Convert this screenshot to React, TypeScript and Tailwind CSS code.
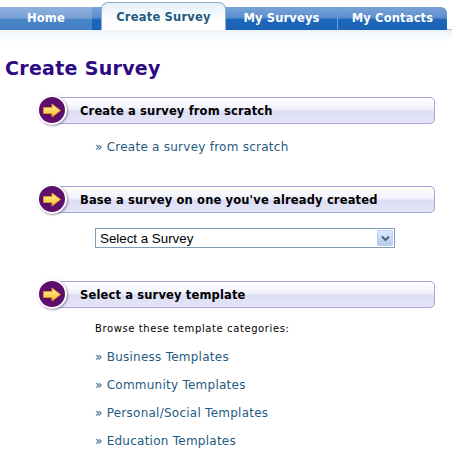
const V = { fontFamily: '"DejaVu Sans", Verdana, sans-serif' };

function Arrow() {
  return (
    <div className="absolute left-[-8px] top-[-2px] flex h-[30px] w-[30px] items-center justify-center rounded-full border-2 border-white bg-[#5c0f6b] shadow-[1px_1px_2px_rgba(90,80,120,0.6)]">
      <svg width="20" height="15" viewBox="0 0 20 15">
        <defs>
          <linearGradient id="ag" x1="0" y1="0" x2="0" y2="1">
            <stop offset="0" stopColor="#fff6a8" />
            <stop offset="1" stopColor="#fbbd22" />
          </linearGradient>
        </defs>
        <path d="M1.5 4.5 H10 V1 L18.5 7.5 L10 14 V10.5 H1.5 Z" fill="url(#ag)" stroke="#e58f28" strokeWidth="1" strokeLinejoin="round" />
      </svg>
    </div>
  );
}

function Header({ children }: { children: string }) {
  return (
    <div className="relative ml-[45px] mr-[17px] h-[27px]">
      <Arrow />
      <div className="flex h-full items-center rounded-tr-[5px] rounded-br-[5px] border border-l-0 border-[#a5a5d8] bg-[linear-gradient(#ffffff_0%,#f1f1fb_45%,#dcdcf5_55%,#e6e6f8_100%)] pl-[35px] pt-[2px] text-[11.5px] font-bold tracking-[0.15px] text-black">
        {children}
      </div>
    </div>
  );
}

function LinkRow({ children, className = "" }: { children: string; className?: string }) {
  return (
    <div className={`ml-[95px] text-[12px] leading-[16px] tracking-[0.25px] text-[#1f5a82] ${className}`}>
      » {children}
    </div>
  );
}

function Tab({ label, w, sep, light }: { label: string; w: string; sep?: boolean; light?: boolean }) {
  return (
    <div
      className={`flex h-[23px] items-center justify-center text-[11.5px] font-bold tracking-[0.15px] text-white ${w} ${sep ? "border-l border-[#6f9fd6]" : ""} ${light ? "bg-[linear-gradient(#8fb1de_0%,#7ba2d6_45%,#4a85c8_55%,#4680c4_100%)]" : ""}`}
    >
      {label}
    </div>
  );
}

export default function App() {
  return (
    <div className="h-[454px] w-[452px] overflow-hidden bg-white" style={V}>
      <div className="relative h-[30px] border-b border-[#a9c3dd]">
        <div className="flex pt-[7px]">
          <div className="flex h-[23px] w-[447px] overflow-hidden rounded-tr-[6px] bg-[linear-gradient(#7aa3d6_0%,#5c8fcf_45%,#1d66bb_55%,#1a62b6_100%)]">
            <Tab label="Home" w="w-[92px]" light />
            <div className="w-[134px]" />
            <Tab label="My Surveys" w="w-[111px]" />
            <Tab label="My Contacts" w="w-[110px]" sep />
          </div>
        </div>
        <div className="absolute left-[101px] top-[2px] flex h-[28px] w-[125px] items-center justify-center rounded-t-[7px] border border-b-0 border-[#8fb0cc] bg-[linear-gradient(#e4eff8_0%,#ffffff_65%)] pt-[2px] text-[11.5px] font-bold tracking-[0.2px] text-[#1f5a82]">
          Create Survey
        </div>
      </div>
      <div className="h-[12px] bg-[linear-gradient(#edf2f9,#ffffff)]" />
      <h1 className="ml-[5px] mt-[13px] text-[19px] font-bold leading-[27px] tracking-[0.3px] text-[#2e0a82]">Create Survey</h1>

      <div className="mt-[15px]">
        <Header>Create a survey from scratch</Header>
        <LinkRow className="mt-[15px]">Create a survey from scratch</LinkRow>
      </div>

      <div className="mt-[31px]">
        <Header>Base a survey on one you've already created</Header>
        <div className="ml-[95px] mt-[15px] flex h-[20px] w-[300px] items-center justify-between border border-[#7f9db9] bg-white pl-[4px] pr-[1px] text-[13.33px] text-black" style={{ fontFamily: '"Liberation Sans", Arial, sans-serif' }}>
          <span className="pt-[1px]">Select a Survey</span>
          <div className="flex h-[16px] w-[16px] items-center justify-center rounded-[1px] border border-[#bcd0f0] bg-[linear-gradient(#dfe9fb,#b4c9ef)]">
            <svg width="9" height="7" viewBox="0 0 9 7">
              <path d="M1 1.5 L4.5 5 L8 1.5" fill="none" stroke="#4d6185" strokeWidth="2" />
            </svg>
          </div>
        </div>
      </div>

      <div className="mt-[33px]">
        <Header>Select a survey template</Header>
        <div className="ml-[95px] mt-[14px] text-[10px] leading-[14px] tracking-[0.6px] text-black">Browse these template categories:</div>
        <LinkRow className="mt-[13px]">Business Templates</LinkRow>
        <LinkRow className="mt-[12px]">Community Templates</LinkRow>
        <LinkRow className="mt-[12px]">Personal/Social Templates</LinkRow>
        <LinkRow className="mt-[12px]">Education Templates</LinkRow>
      </div>
    </div>
  );
}
